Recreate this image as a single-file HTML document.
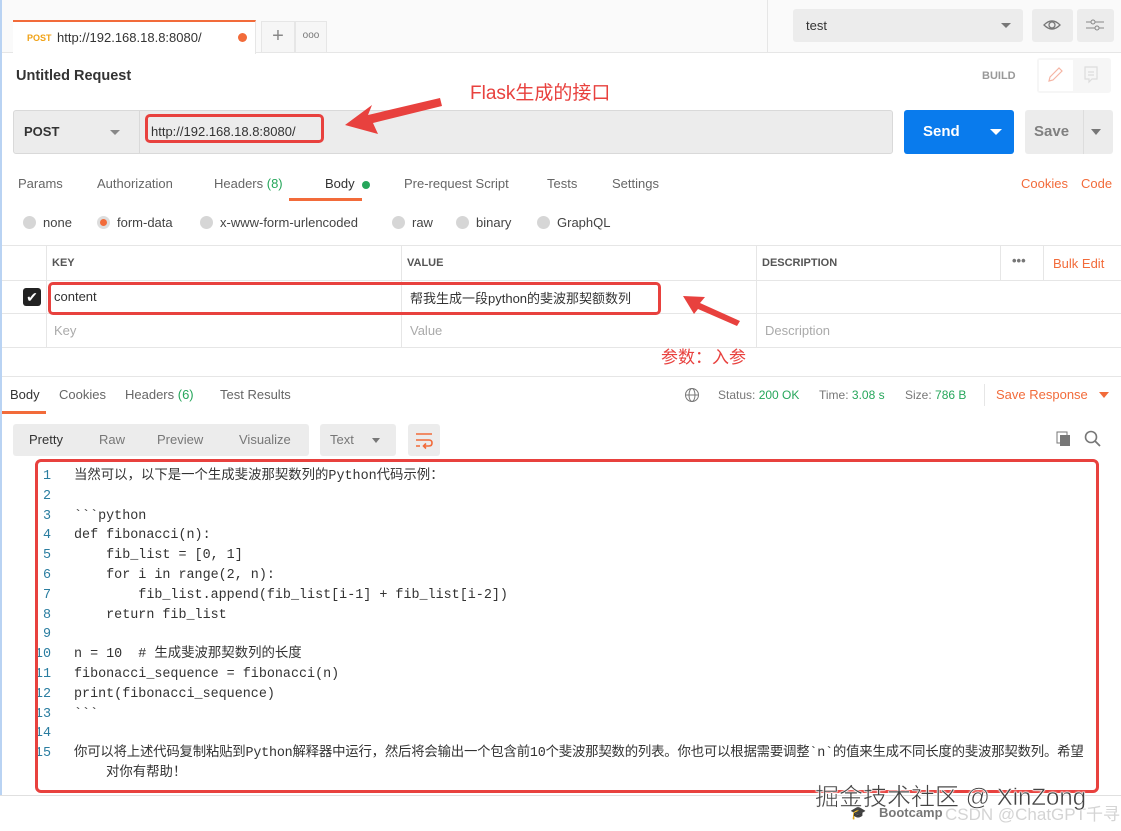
<!DOCTYPE html>
<html><head><meta charset="utf-8"><style>
*{margin:0;padding:0;box-sizing:border-box}
body{width:1121px;height:831px;overflow:hidden;background:#fff;font-family:"Liberation Sans","Noto Sans CJK SC",sans-serif;color:#333;position:relative;font-size:13px}
.a{position:absolute;white-space:nowrap}
.mono{font-family:"Liberation Mono","Noto Sans CJK SC",monospace;font-size:13.4px}
.ln{color:#2a7da0}
.rad{display:inline-block;width:13px;height:13px;border-radius:50%;background:#d6d6d6;vertical-align:-2px;margin-right:7px}
.r{display:flex}
.r .ln{width:21px;text-align:right;margin-right:23px}
.p{white-space:pre}
</style></head><body>
<div class="a" style="left:0;top:0;width:2px;height:795px;background:#b9d3f3"></div>
<div class="a" style="left:2px;top:0;width:1119px;height:53px;background:#fafafa;border-bottom:1px solid #e6e6e6"></div>
<div class="a" style="left:13px;top:20px;width:243px;height:34px;background:#fff;border-top:2px solid #f26b3a;border-right:1px solid #e6e6e6"></div>
<div class="a" style="left:27px;top:33px;font-size:9px;font-weight:bold;color:#f0a216">POST</div>
<div class="a" style="left:57px;top:30px;font-size:13px;color:#333">http://192.168.18.8:8080/</div>
<div class="a" style="left:238px;top:33px;width:9px;height:9px;border-radius:50%;background:#f26b3a"></div>
<div class="a" style="left:261px;top:21px;width:34px;height:32px;border:1px solid #e6e6e6;background:#f6f6f6;text-align:center;font-size:20px;line-height:28px;color:#888">+</div>
<div class="a" style="left:295px;top:21px;width:32px;height:32px;border:1px solid #e6e6e6;background:#f6f6f6;text-align:center;font-size:10px;line-height:28px;color:#777">ooo</div>
<div class="a" style="left:767px;top:0;width:1px;height:53px;background:#e6e6e6"></div>
<div class="a" style="left:793px;top:9px;width:230px;height:33px;background:#ececec;border-radius:3px"></div>
<div class="a" style="left:806px;top:18px;font-size:13px;color:#333">test</div>
<div class="a" style="left:1001px;top:23px;border:5px solid transparent;border-top:5px solid #777"></div>
<div class="a" style="left:1032px;top:9px;width:41px;height:33px;background:#ececec;border-radius:3px"></div>
<svg class="a" style="left:1042px;top:17px" width="20" height="16"><path d="M2 8Q10 0 18 8Q10 16 2 8Z" fill="none" stroke="#777" stroke-width="1.3"/><circle cx="10" cy="8" r="3" fill="none" stroke="#777" stroke-width="1.3"/></svg>
<div class="a" style="left:1077px;top:9px;width:37px;height:33px;background:#ececec;border-radius:3px"></div>
<svg class="a" style="left:1085px;top:17px" width="20" height="16"><path d="M1 5H19M1 11H19" stroke="#888"/><circle cx="8" cy="5" r="2" fill="#ececec" stroke="#888"/><circle cx="12" cy="11" r="2" fill="#ececec" stroke="#888"/></svg>
<div class="a" style="left:16px;top:68px;font-size:14.5px;font-weight:bold;color:#333">Untitled Request</div>
<div class="a" style="left:982px;top:70px;font-size:11px;font-weight:bold;color:#999">BUILD</div>
<div class="a" style="left:1037px;top:58px;width:74px;height:35px;background:#f6f6f6;border-radius:3px"></div>
<div class="a" style="left:1039px;top:60px;width:34px;height:31px;background:#fff"></div>
<svg class="a" style="left:1045px;top:65px" width="20" height="20"><path d="M4 16L5 12L14 3L17 6L8 15Z" fill="none" stroke="#f5b5a4" stroke-width="1.2"/></svg>
<svg class="a" style="left:1083px;top:66px" width="16" height="18"><path d="M2 1H14V13H9L6 16V13H2Z M5 6H11M5 9H11" fill="none" stroke="#ddd" stroke-width="1.2"/></svg>
<div class="a" style="left:13px;top:110px;width:880px;height:44px;background:#ececec;border:1px solid #d9d9d9;border-radius:3px"></div>
<div class="a" style="left:139px;top:111px;width:1px;height:42px;background:#d9d9d9"></div>
<div class="a" style="left:24px;top:124px;font-size:13px;font-weight:bold;color:#333">POST</div>
<div class="a" style="left:110px;top:130px;border:5px solid transparent;border-top:5px solid #888"></div>
<div class="a" style="left:151px;top:124px;font-size:13px;color:#333">http://192.168.18.8:8080/</div>
<div class="a" style="left:904px;top:110px;width:110px;height:44px;background:#097bed;border-radius:3px"></div>
<div class="a" style="left:923px;top:123px;font-size:15px;font-weight:bold;color:#fff">Send</div>
<div class="a" style="left:990px;top:129px;border:6px solid transparent;border-top:6px solid #fff"></div>
<div class="a" style="left:1025px;top:110px;width:88px;height:44px;background:#ececec;border-radius:3px"></div>
<div class="a" style="left:1083px;top:110px;width:1px;height:44px;background:#ddd"></div>
<div class="a" style="left:1034px;top:123px;font-size:15px;font-weight:bold;color:#808080">Save</div>
<div class="a" style="left:1091px;top:129px;border:5px solid transparent;border-top:6px solid #777"></div>
<div class="a" style="left:18px;top:176px;color:#666">Params</div>
<div class="a" style="left:97px;top:176px;color:#666">Authorization</div>
<div class="a" style="left:214px;top:176px;color:#666">Headers <span style="color:#26a65b">(8)</span></div>
<div class="a" style="left:325px;top:176px;color:#333">Body</div>
<div class="a" style="left:362px;top:181px;width:8px;height:8px;border-radius:50%;background:#26a65b"></div>
<div class="a" style="left:289px;top:198px;width:73px;height:3px;background:#f26b3a"></div>
<div class="a" style="left:404px;top:176px;color:#666">Pre-request Script</div>
<div class="a" style="left:547px;top:176px;color:#666">Tests</div>
<div class="a" style="left:612px;top:176px;color:#666">Settings</div>
<div class="a" style="left:1021px;top:176px;color:#f26b3a">Cookies</div>
<div class="a" style="left:1081px;top:176px;color:#f26b3a">Code</div>
<div class="a" style="left:23px;top:215px;color:#444"><span class="rad"></span>none</div>
<div class="a" style="left:97px;top:215px;color:#444"><span class="rad" style="background:#f26b3a;border:3px solid #ddd"></span>form-data</div>
<div class="a" style="left:200px;top:215px;color:#444"><span class="rad"></span>x-www-form-urlencoded</div>
<div class="a" style="left:392px;top:215px;color:#444"><span class="rad"></span>raw</div>
<div class="a" style="left:456px;top:215px;color:#444"><span class="rad"></span>binary</div>
<div class="a" style="left:537px;top:215px;color:#444"><span class="rad"></span>GraphQL</div>
<div class="a" style="left:2px;top:245px;width:1119px;height:1px;background:#e6e6e6"></div>
<div class="a" style="left:2px;top:280px;width:1119px;height:1px;background:#e6e6e6"></div>
<div class="a" style="left:2px;top:313px;width:1119px;height:1px;background:#e6e6e6"></div>
<div class="a" style="left:2px;top:347px;width:1119px;height:1px;background:#e6e6e6"></div>
<div class="a" style="left:46px;top:245px;width:1px;height:102px;background:#e6e6e6"></div>
<div class="a" style="left:401px;top:245px;width:1px;height:102px;background:#e6e6e6"></div>
<div class="a" style="left:756px;top:245px;width:1px;height:102px;background:#e6e6e6"></div>
<div class="a" style="left:1000px;top:245px;width:1px;height:35px;background:#e6e6e6"></div>
<div class="a" style="left:1043px;top:245px;width:1px;height:35px;background:#e6e6e6"></div>
<div class="a" style="left:52px;top:257px;font-size:11px;font-weight:bold;color:#555">KEY</div>
<div class="a" style="left:407px;top:257px;font-size:11px;font-weight:bold;color:#555">VALUE</div>
<div class="a" style="left:762px;top:257px;font-size:11px;font-weight:bold;color:#555">DESCRIPTION</div>
<div class="a" style="left:1012px;top:253px;font-size:13px;font-weight:bold;color:#777">•••</div>
<div class="a" style="left:1053px;top:256px;color:#f26b3a">Bulk Edit</div>
<div class="a" style="left:23px;top:288px;width:18px;height:18px;background:#222;border-radius:3px;color:#fff;font-size:14px;text-align:center;line-height:18px">✔</div>
<div class="a" style="left:54px;top:289px;color:#333">content</div>
<div class="a" style="left:410px;top:288px;color:#333">帮我生成一段python的斐波那契额数列</div>
<div class="a" style="left:54px;top:323px;color:#aaa">Key</div>
<div class="a" style="left:410px;top:323px;color:#aaa">Value</div>
<div class="a" style="left:765px;top:323px;color:#aaa">Description</div>
<div class="a" style="left:2px;top:376px;width:1119px;height:1px;background:#e6e6e6"></div>
<div class="a" style="left:10px;top:387px;color:#333">Body</div>
<div class="a" style="left:2px;top:411px;width:44px;height:3px;background:#f26b3a"></div>
<div class="a" style="left:59px;top:387px;color:#666">Cookies</div>
<div class="a" style="left:125px;top:387px;color:#666">Headers <span style="color:#26a65b">(6)</span></div>
<div class="a" style="left:220px;top:387px;color:#666">Test Results</div>
<svg class="a" style="left:684px;top:387px" width="16" height="16"><circle cx="8" cy="8" r="6.5" fill="none" stroke="#777"/><ellipse cx="8" cy="8" rx="3" ry="6.5" fill="none" stroke="#777"/><path d="M1.5 8H14.5" stroke="#777"/></svg>
<div class="a" style="left:718px;top:388px;font-size:12px;color:#777">Status: <span style="color:#26a65b">200 OK</span></div>
<div class="a" style="left:819px;top:388px;font-size:12px;color:#777">Time: <span style="color:#26a65b">3.08 s</span></div>
<div class="a" style="left:905px;top:388px;font-size:12px;color:#777">Size: <span style="color:#26a65b">786 B</span></div>
<div class="a" style="left:984px;top:384px;width:1px;height:22px;background:#e6e6e6"></div>
<div class="a" style="left:996px;top:387px;color:#f26b3a">Save Response</div>
<div class="a" style="left:1099px;top:392px;border:5px solid transparent;border-top:6px solid #f26b3a"></div>
<div class="a" style="left:13px;top:424px;width:296px;height:32px;background:#ececec;border-radius:3px"></div>
<div class="a" style="left:29px;top:432px;color:#333">Pretty</div>
<div class="a" style="left:99px;top:432px;color:#777">Raw</div>
<div class="a" style="left:157px;top:432px;color:#777">Preview</div>
<div class="a" style="left:239px;top:432px;color:#777">Visualize</div>
<div class="a" style="left:320px;top:424px;width:76px;height:32px;background:#ececec;border-radius:3px"></div>
<div class="a" style="left:330px;top:432px;color:#777">Text</div>
<div class="a" style="left:372px;top:438px;border:4px solid transparent;border-top:5px solid #777"></div>
<div class="a" style="left:408px;top:424px;width:32px;height:32px;background:#ececec;border-radius:3px"></div>
<svg class="a" style="left:414px;top:430px" width="20" height="20"><path d="M2 4H18M2 10H15Q18 10 18 13Q18 16 15 16H10M12 13.5L9.5 16L12 18.5M2 16H6" fill="none" stroke="#f26b3a" stroke-width="1.6"/></svg>
<svg class="a" style="left:1055px;top:430px" width="18" height="18"><rect x="2" y="2" width="10" height="11" fill="none" stroke="#777"/><rect x="5" y="5" width="10" height="11" fill="#777"/></svg>
<svg class="a" style="left:1084px;top:430px" width="18" height="18"><circle cx="7" cy="7" r="5.5" fill="none" stroke="#777" stroke-width="1.6"/><path d="M11 11L16 16" stroke="#777" stroke-width="1.8"/></svg>
<div class="a mono" style="left:30px;top:467px;line-height:19.8px">
<div class="r"><span class="ln">1</span><span>当然可以，以下是一个生成斐波那契数列的Python代码示例：</span></div>
<div class="r"><span class="ln">2</span><span></span></div>
<div class="r"><span class="ln">3</span><span>&#96;&#96;&#96;python</span></div>
<div class="r"><span class="ln">4</span><span>def fibonacci(n):</span></div>
<div class="r"><span class="ln">5</span><span class="p">    fib_list = [0, 1]</span></div>
<div class="r"><span class="ln">6</span><span class="p">    for i in range(2, n):</span></div>
<div class="r"><span class="ln">7</span><span class="p">        fib_list.append(fib_list[i-1] + fib_list[i-2])</span></div>
<div class="r"><span class="ln">8</span><span class="p">    return fib_list</span></div>
<div class="r"><span class="ln">9</span><span></span></div>
<div class="r"><span class="ln">10</span><span class="p">n = 10  # 生成斐波那契数列的长度</span></div>
<div class="r"><span class="ln">11</span><span>fibonacci_sequence = fibonacci(n)</span></div>
<div class="r"><span class="ln">12</span><span>print(fibonacci_sequence)</span></div>
<div class="r"><span class="ln">13</span><span>&#96;&#96;&#96;</span></div>
<div class="r"><span class="ln">14</span><span></span></div>
<div class="r"><span class="ln">15</span><span style="letter-spacing:-0.2px">你可以将上述代码复制粘贴到Python解释器中运行，然后将会输出一个包含前10个斐波那契数的列表。你也可以根据需要调整&#96;n&#96;的值来生成不同长度的斐波那契数列。希望</span></div>
<div class="r"><span class="ln"></span><span style="padding-left:32px">对你有帮助！</span></div>
</div>
<div class="a" style="left:0;top:795px;width:1121px;height:1px;background:#e0e0e0"></div>
<div class="a" style="left:850px;top:805px;font-size:13px;color:#888">&#127891;</div>
<div class="a" style="left:879px;top:805px;font-size:13px;font-weight:bold;color:#777">Bootcamp</div>
<div class="a" style="left:945px;top:800px;font-size:17px;color:rgba(170,170,170,.5)">CSDN @ChatGPT千寻</div>
<div class="a" style="left:145px;top:114px;width:179px;height:29px;border:3px solid #e8413e;border-radius:5px"></div>
<div class="a" style="left:48px;top:282px;width:613px;height:33px;border:3px solid #e8413e;border-radius:5px"></div>
<div class="a" style="left:35px;top:459px;width:1064px;height:334px;border:3px solid #e8413e;border-radius:6px"></div>
<svg class="a" style="left:0;top:0" width="1121" height="831"><path d="M440 98L368 115L372 105L345 125L378 134L373 123L442 106Z" fill="#e8413e"/><path d="M740 321L700 303L705 297L683 296L694 314L698 309L737 326Z" fill="#e8413e"/></svg>
<div class="a" style="left:470px;top:78px;font-size:19px;color:#e8413e">Flask生成的接口</div>
<div class="a" style="left:661px;top:343px;font-size:17px;color:#e8413e">参数：入参</div>
<div class="a" style="left:815px;top:777px;font-size:24px;color:#444;-webkit-text-stroke:0.5px #fff;text-shadow:0 0 2px #fff">掘金技术社区 @ XinZong</div>
</body></html>
